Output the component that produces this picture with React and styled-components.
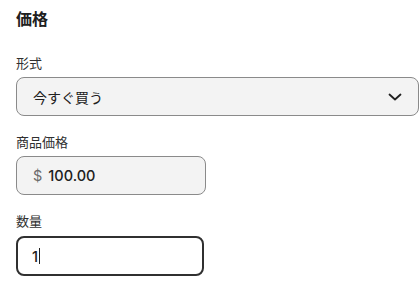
import React from "react";
import styled, { createGlobalStyle } from "styled-components";

const Global = createGlobalStyle`
  html, body { margin: 0; padding: 0; background: #fff; }
  body { font-family: Inter, "Noto Sans CJK JP", sans-serif; color: #303030; }
`;

const Page = styled.div`
  display: flex;
  flex-direction: column;
  padding: 8px 0 0 16px;
`;

const Title = styled.h2`
  margin: 0 0 26px;
  font-size: 16px;
  line-height: 20px;
  font-weight: 700;
  color: #202020;
  font-family: "Noto Sans CJK JP", sans-serif;
`;

const Field = styled.div`
  display: flex;
  flex-direction: column;
  gap: ${(p) => p.$gap || 5}px;
  margin-bottom: 17px;
`;

const Label = styled.label`
  font-size: 13px;
  line-height: 18px;
  color: #303030;
  font-family: "Noto Sans CJK JP", sans-serif;
`;

const Box = styled.div`
  box-sizing: border-box;
  display: flex;
  align-items: center;
  width: ${(p) => p.$width}px;
  height: ${(p) => p.$height || 39}px;
  padding: 0 ${(p) => (p.$focused ? 14 : 16)}px;
  border-radius: 8px;
  background: ${(p) => (p.$focused ? "#ffffff" : "#f3f3f3")};
  border: ${(p) => (p.$focused ? "2px solid #303030" : "1px solid #8a8a8a")};
  font-size: 14px;
  color: #202020;
`;

const SelectText = styled.span`
  flex: 1;
  font-family: "Noto Sans CJK JP", sans-serif;
  font-size: 14px;
`;

const Prefix = styled.span`
  color: #6b6b6b;
  margin-right: 6px;
  font-family: Inter, sans-serif;
  font-size: 14.5px;
`;

const Value = styled.span`
  font-family: Inter, sans-serif;
  font-size: 14.5px;
  font-weight: 500;
  color: #202020;
`;

const Caret = styled.span`
  display: inline-block;
  width: 1px;
  height: 16px;
  background: #202020;
  margin-left: 1px;
`;

const Chevron = () => (
  <svg width="14" height="8" viewBox="0 0 14 8" fill="none">
    <path d="M1.5 1.5 L7 6.5 L12.5 1.5" stroke="#202020" strokeWidth="1.8" strokeLinecap="round" strokeLinejoin="round" />
  </svg>
);

export default function App() {
  return (
    <>
      <Global />
      <Page>
        <Title>価格</Title>
        <Field>
          <Label>形式</Label>
          <Box $width={403}>
            <SelectText>今すぐ買う</SelectText>
            <Chevron />
          </Box>
        </Field>
        <Field>
          <Label>商品価格</Label>
          <Box $width={190}>
            <Prefix>$</Prefix>
            <Value>100.00</Value>
          </Box>
        </Field>
        <Field $gap={6}>
          <Label>数量</Label>
          <Box $width={188} $height={40} $focused>
            <Value>1</Value>
            <Caret />
          </Box>
        </Field>
      </Page>
    </>
  );
}
